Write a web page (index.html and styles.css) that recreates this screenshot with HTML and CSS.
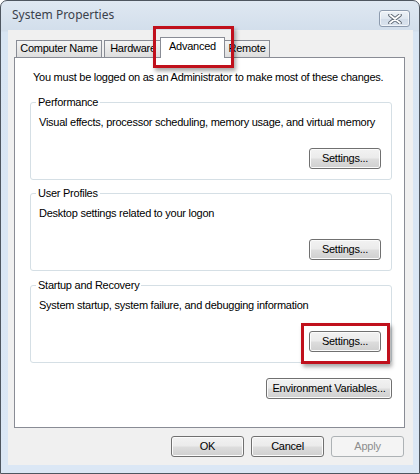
FILE: index.html
```html
<!DOCTYPE html>
<html>
<head>
<meta charset="utf-8">
<link rel="stylesheet" href="styles.css">
</head>
<body>
<div class="window">
  <div class="titlebar">
    <span class="title">System Properties</span>
    <button class="close" aria-label="Close">
      <svg width="14" height="10" viewBox="0 0 14 10">
        <path d="M2 1 L12 9 M12 1 L2 9" stroke="#5a6470" stroke-width="3.6" stroke-linecap="round"/>
        <path d="M2 1 L12 9 M12 1 L2 9" stroke="#ffffff" stroke-width="1.8" stroke-linecap="round"/>
      </svg>
    </button>
  </div>
  <div class="client">
    <div class="tabs">
      <div class="tab tab-cn">Computer Name</div>
      <div class="tab tab-hw">Hardware</div>
      <div class="tab tab-adv selected">Advanced</div>
      <div class="tab tab-rem">Remote</div>
    </div>
    <div class="panel">
      <p class="intro">You must be logged on as an Administrator to make most of these changes.</p>
      <fieldset class="group g-perf">
        <legend>Performance</legend>
        <p class="desc">Visual effects, processor scheduling, memory usage, and virtual memory</p>
        <div class="row"><button class="btn settings">Settings...</button></div>
      </fieldset>
      <fieldset class="group g-up">
        <legend>User Profiles</legend>
        <p class="desc">Desktop settings related to your logon</p>
        <div class="row"><button class="btn settings">Settings...</button></div>
      </fieldset>
      <fieldset class="group g-sr">
        <legend>Startup and Recovery</legend>
        <p class="desc">System startup, system failure, and debugging information</p>
        <div class="row"><button class="btn settings">Settings...</button></div>
      </fieldset>
      <div class="row env-row"><button class="btn env">Environment Variables...</button></div>
    </div>
    <div class="footer">
      <button class="btn dlg">OK</button>
      <button class="btn dlg">Cancel</button>
      <button class="btn dlg" disabled>Apply</button>
    </div>
  </div>
  <div class="mark mark-tab"></div>
  <div class="mark mark-btn"></div>
</div>
</body>
</html>
```

FILE: styles.css
```css
* { box-sizing: border-box; }
html, body { margin: 0; padding: 0; background: #ffffff; }
body { font-family: "Liberation Sans", Arial, sans-serif; font-size: 11px; line-height: 13px; letter-spacing: -0.25px; color: #000; }

.window {
  position: relative;
  width: 420px;
  height: 474px;
  border: 1px solid #4e5660;
  border-radius: 7px 7px 0 0;
  background: linear-gradient(to bottom, #dfe8f2 0px, #d2deeb 30px, #d8e5f3 31px, #dbe7f5 100%);
  padding: 0 6px 8px 7px;
  display: flex;
  flex-direction: column;
}

.titlebar {
  height: 29px;
  display: flex;
  align-items: flex-start;
  justify-content: space-between;
}
.title {
  font-family: "Noto Sans", "Open Sans", sans-serif;
  font-size: 12px;
  line-height: 16px;
  letter-spacing: 0;
  color: #3a414b;
  margin: 6px 0 0 4px;
}
.close {
  width: 31px;
  height: 17px;
  margin: 9px 3px 0 0;
  padding: 0;
  border: 1px solid #8d9bae;
  border-radius: 3px;
  background: linear-gradient(to bottom, #eef3f8 0%, #dfe7f0 50%, #d2dce8 51%, #dae3ee 100%);
  box-shadow: inset 0 0 0 1px rgba(255,255,255,0.6);
  display: flex;
  align-items: center;
  justify-content: center;
}

.client {
  flex: 1;
  background: #f0f0f0;
  padding: 7px 8px 7px 6px;
  display: flex;
  flex-direction: column;
}

.tabs {
  height: 20px;
  display: flex;
  align-items: flex-end;
  padding-left: 2px;
}
.tab {
  height: 17px;
  border: 1px solid #898c95;
  border-bottom: none;
  background: linear-gradient(to bottom, #f4f4f4 0%, #e9e9e9 50%, #dedede 100%);
  padding-top: 1px;
  text-align: center;
  white-space: nowrap;
}
.tab-cn { width: 86px; margin-right: 2px; }
.tab-hw { width: 58px; }
.tab-adv { width: 65px; margin-left: -2px; }
.tab-rem { width: 46px; margin-left: -1px; }
.tab.selected {
  position: relative;
  z-index: 1;
  height: 21px;
  margin-bottom: -1px;
  background: #ffffff;
  padding-top: 2px;
}

.panel {
  background: #ffffff;
  border: 1px solid #898c95;
  padding: 13px 12px 28px 15px;
  display: flex;
  flex-direction: column;
}
.intro { margin: 0 0 0 3px; white-space: nowrap; }

.group {
  margin: 12px 0 0 0;
  padding: 7px 10px 10px 8px;
  border: 1px solid #d5dfe5;
  border-radius: 3px;
  min-width: 0;
}
.g-up { margin-top: 7px; }
.g-sr { margin-top: 8px; }
.group legend {
  padding: 0 2px;
  margin-left: -3px;
  line-height: 13px;
}
.desc { margin: 0; white-space: nowrap; }
.row { display: flex; justify-content: flex-end; }
.group .row { margin-top: 19px; }
.env-row { margin-top: 15px; }

.btn {
  font-family: "Liberation Sans", Arial, sans-serif;
  font-size: 11px;
  line-height: 13px;
  letter-spacing: -0.25px;
  color: #000;
  height: 21px;
  padding: 0;
  border: 1px solid #707070;
  border-radius: 3px;
  background: linear-gradient(to bottom, #f2f2f2 0%, #ebebeb 48%, #dddddd 52%, #cfcfcf 100%);
  box-shadow: inset 0 0 0 1px #fbfbfb;
}
.btn:disabled {
  color: #8d8d8d;
  border-color: #adb2b5;
  background: #f4f4f4;
  box-shadow: none;
}
.settings { width: 72px; }
.env { width: 126px; }

.footer {
  display: flex;
  justify-content: flex-end;
  gap: 7px;
  margin-top: 8px;
  padding-right: 1px;
}
.dlg { width: 73px; }

.mark {
  position: absolute;
  border: 3px solid #c0101c;
  box-shadow: 2px 3px 4px rgba(0,0,0,0.35);
}
.mark-tab { left: 152px; top: 25px; width: 81px; height: 42px; }
.mark-btn { left: 300px; top: 322px; width: 89px; height: 41px; }
```
